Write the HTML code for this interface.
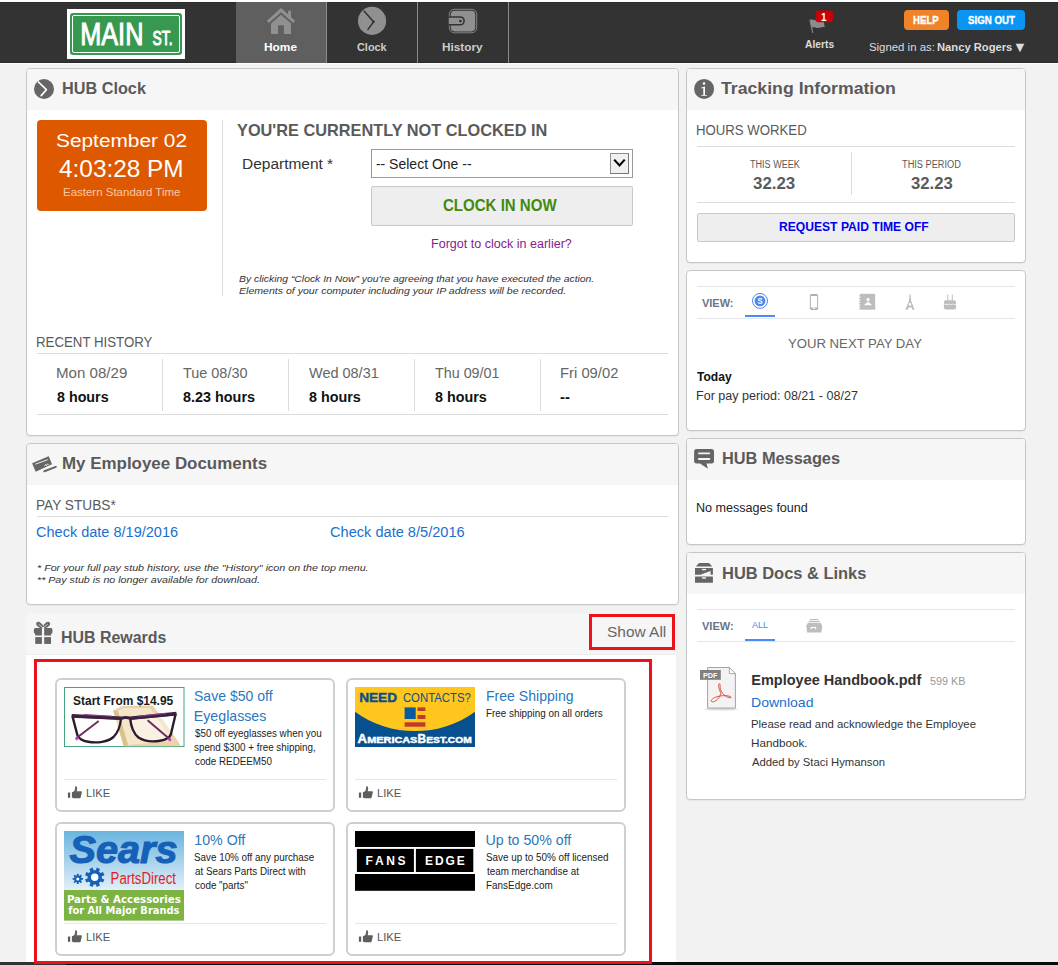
<!DOCTYPE html>
<html lang="en">
<head>
<meta charset="utf-8">
<title>HUB Home</title>
<style>
*{box-sizing:border-box;margin:0;padding:0}
html,body{width:1058px;height:965px;overflow:hidden;background:#f2f2f2;font-family:"Liberation Sans","DejaVu Sans",sans-serif;color:#333}
body{position:relative}
.a{position:absolute}
.t{position:absolute;white-space:nowrap;line-height:1;transform-origin:0 0}
#topstrip{left:0;top:0;width:1058px;height:2px;background:#fff}
#hdr{left:0;top:2px;width:1058px;height:61px;background:#333;border-bottom:1px solid #2a2a2a;border-top:1px solid #2c2c2c}
#hdrline{left:0;top:63px;width:1058px;height:1px;background:#fcfcfc}
#botstrip{left:0;top:962px;width:1058px;height:3px;background:#0a0a12}
.tab{position:absolute;top:2px;height:61px;width:91px;border-right:1px solid #8c8c8c}
.panel{position:absolute;background:#fff;border:1px solid #c6c6c6;border-radius:4px;box-shadow:0 1px 1px rgba(0,0,0,.05)}
.ph{position:absolute;left:0;top:0;right:0;background:#f6f6f6;border-radius:3px 3px 0 0}
.hr{position:absolute;height:1px;background:#dcdcdc}
.vr{position:absolute;width:1px;background:#dcdcdc}
.btn{position:absolute;background:#eee;border:1px solid #c8c8c8;border-radius:2px}
.card{position:absolute;width:280px;height:134px;background:#fff;border:2px solid #cfcfcf;border-radius:6px}
.chr{position:absolute;height:1px;background:#e6e6e6}
svg{position:absolute;overflow:visible}
</style>
</head>
<body>

<div class="a" id="topstrip"></div>
<div class="a" id="hdr"></div>
<div class="a" id="hdrline"></div>

<!-- logo -->
<div class="a" style="left:67px;top:9px;width:118px;height:50px;background:#fff"></div>
<div class="a" style="left:70px;top:13px;width:112px;height:42px;background:#37994f;border-radius:3px"></div>
<div class="a" style="left:72px;top:15px;width:108px;height:38px;border:1px solid #fff;border-radius:2px"></div>

<!-- nav tabs -->
<div class="tab" style="left:236px;background:#5f5f5f"></div>
<div class="tab" style="left:327px"></div>
<div class="tab" style="left:418px"></div>

<!-- header buttons -->
<div class="a" style="left:904px;top:10px;width:45px;height:20px;background:#f08228;border-radius:4px"></div>
<div class="a" style="left:957px;top:10px;width:68px;height:20px;background:#0a95f5;border-radius:4px"></div>

<!-- LEFT PANEL 1: HUB Clock -->
<div class="panel" style="left:26px;top:68px;width:653px;height:368px"><div class="ph" style="height:41px"></div></div>
<div class="a" style="left:37px;top:120px;width:170px;height:91px;background:#de5800;border-radius:4px"></div>
<div class="vr" style="left:222px;top:120px;height:176px"></div>
<div class="a" style="left:371px;top:149px;width:262px;height:29px;background:#fff;border:1px solid #9a9a9a"></div>
<div class="a" style="left:610px;top:153px;width:19px;height:21px;background:#f0f0f0;border:1px solid #8e8e8e;border-right-color:#7a7a7a;border-bottom-color:#7a7a7a"></div>
<div class="btn" style="left:371px;top:186px;width:262px;height:40px"></div>
<div class="hr" style="left:37px;top:353px;width:631px"></div>
<div class="hr" style="left:37px;top:414px;width:631px"></div>
<div class="vr" style="left:162px;top:359px;height:52px"></div>
<div class="vr" style="left:288px;top:359px;height:52px"></div>
<div class="vr" style="left:414px;top:359px;height:52px"></div>
<div class="vr" style="left:540px;top:359px;height:52px"></div>

<!-- LEFT PANEL 2: My Employee Documents -->
<div class="panel" style="left:26px;top:443px;width:653px;height:162px"><div class="ph" style="height:41px"></div></div>
<div class="hr" style="left:37px;top:516px;width:631px"></div>

<!-- LEFT PANEL 3: HUB Rewards -->
<div class="a" style="left:26px;top:613px;width:650px;height:42px;background:#f6f6f6"></div>
<div class="a" style="left:26px;top:654px;width:650px;height:311px;background:#fff;border-top:1px solid #eee"></div>
<div class="a" id="botstrip"></div><div class="a" style="left:0;top:962px;width:66px;height:3px;background:#333"></div>
<div class="a" style="left:589px;top:614px;width:86px;height:36px;border:3px solid #ec111a"></div>
<div class="a" style="left:34px;top:659px;width:618px;height:305px;border:3px solid #ec111a"></div>
<div class="card" style="left:55px;top:678px"></div>
<div class="card" style="left:346px;top:678px"></div>
<div class="card" style="left:55px;top:822px"></div>
<div class="card" style="left:346px;top:822px"></div>
<div class="chr" style="left:64px;top:779px;width:262px"></div>
<div class="chr" style="left:355px;top:779px;width:262px"></div>
<div class="chr" style="left:64px;top:923px;width:262px"></div>
<div class="chr" style="left:355px;top:923px;width:262px"></div>

<!-- RIGHT PANEL 1: Tracking -->
<div class="panel" style="left:686px;top:68px;width:340px;height:195px"><div class="ph" style="height:41px"></div></div>
<div class="hr" style="left:697px;top:146px;width:318px"></div>
<div class="hr" style="left:697px;top:202px;width:318px"></div>
<div class="vr" style="left:851px;top:152px;height:43px"></div>
<div class="btn" style="left:697px;top:213px;width:318px;height:29px"></div>

<!-- RIGHT PANEL 2: view -->
<div class="panel" style="left:686px;top:270px;width:340px;height:161px"></div>
<div class="hr" style="left:697px;top:286px;width:318px;background:#e3e5eb"></div>
<div class="hr" style="left:697px;top:318px;width:318px;background:#e3e5eb"></div>
<div class="a" style="left:745px;top:315px;width:30px;height:2px;background:#4c8bf5"></div>

<!-- RIGHT PANEL 3: messages -->
<div class="panel" style="left:686px;top:438px;width:340px;height:107px"><div class="ph" style="height:41px"></div></div>

<!-- RIGHT PANEL 4: docs -->
<div class="panel" style="left:686px;top:552px;width:340px;height:248px"><div class="ph" style="height:41px"></div></div>
<div class="hr" style="left:697px;top:609px;width:318px;background:#e3e5eb"></div>
<div class="hr" style="left:697px;top:641px;width:318px;background:#e3e5eb"></div>
<div class="a" style="left:745px;top:639px;width:30px;height:2px;background:#4c8bf5"></div>


<svg width="1058" height="965" viewBox="0 0 1058 965" style="left:0;top:0" font-family="'Liberation Sans',sans-serif">
<!-- logo text -->
<g fill="#fff" font-weight="normal" stroke="#fff" stroke-width="1">
<text x="80.2" y="45" font-size="31" textLength="63.2" lengthAdjust="spacingAndGlyphs">MAIN</text>
<text x="152.6" y="45" font-size="19.5" textLength="20" lengthAdjust="spacingAndGlyphs">ST.</text>
</g>
<!-- home icon -->
<g fill="#909090">
<path d="M281 7.9L295.1 20.7L293.2 23L281 12.2L268.8 23L266.9 20.7Z"/>
<rect x="288.1" y="10.7" width="2.9" height="6.5"/>
<path d="M281 14.8L291 23.6V34H283.9V25.2H278.1V34H271V23.6Z"/>
</g>
<!-- clock icon -->
<circle cx="372.05" cy="20.9" r="14.1" fill="#909090"/>
<path d="M364.25 11.2L373.5 21.85L368 29.4" fill="none" stroke="#333" stroke-width="1.6" stroke-linecap="round" stroke-linejoin="round"/>
<circle cx="373.5" cy="21.85" r="1.3" fill="#333"/>
<!-- history (wallet) icon -->
<rect x="449.3" y="9.3" width="27.4" height="23.5" rx="5" fill="none" stroke="#909090" stroke-width="0.9"/>
<rect x="450.8" y="10.8" width="24.4" height="20.6" rx="3.8" fill="#909090"/>
<path d="M448.9 16.2H460.2A4.7 4.7 0 0 1 460.2 25.6H448.9Z" fill="#333"/>
<path d="M448.9 17.8H460.2A3.1 3.1 0 0 1 460.2 24H448.9Z" fill="#909090"/>
<circle cx="460.4" cy="21.1" r="1.4" fill="#333"/>
<!-- alerts flag -->
<path d="M809.9 19.6L812.7 32.8" stroke="#8c8c8c" stroke-width="1.1" fill="none"/>
<path d="M810.2 20C812.5 18.8 814.5 20.6 817 20.4C819.5 20.2 821.5 19.2 823.6 19.6L824.6 27.2C822 26.6 820 27.9 817.5 27.9C815.5 27.9 813.6 26.6 811.6 27.5Z" fill="#8c8c8c"/>
<rect x="815.5" y="10.6" width="17.5" height="11.6" rx="3" fill="#c8000a"/>
<!-- HUB Clock title icon -->
<circle cx="44" cy="89" r="10" fill="#666"/>
<path d="M38.4 82L46.4 89.7L41.2 95.6" fill="none" stroke="#fff" stroke-width="1.7" stroke-linecap="round" stroke-linejoin="round"/>
<!-- Documents (check) icon -->
<path d="M32.1 463.2L48.7 456.2L52 464.2L35.7 471.7Z" fill="#666"/>
<path d="M35.3 464.2L47.7 459.7" stroke="#fff" stroke-width="0.9" fill="none"/>
<path d="M44.6 466.2L45.6 464.4L46.6 465.6L47.6 463.8L48.6 464.8" stroke="#fff" stroke-width="0.8" fill="none"/>
<path d="M44.4 471.3L55.8 466.9" stroke="#666" stroke-width="2" stroke-linecap="round" fill="none"/>
<!-- gift icon -->
<g fill="#666">
<path d="M35.2 628H41.9V635.6H35.25V634A1.5 3 0 0 1 35.2 628Z"/>
<path d="M44.2 628H51V628A1.5 3 0 0 1 51 634V635.6H44.2Z"/>
<rect x="35.25" y="637.1" width="6.65" height="6.8"/>
<rect x="44.2" y="637.1" width="6.8" height="6.8"/>
<ellipse cx="39.6" cy="625" rx="3.9" ry="2.3" transform="rotate(40 39.6 625)"/>
<ellipse cx="46.7" cy="625" rx="3.9" ry="2.3" transform="rotate(-40 46.7 625)"/>
</g>
<path d="M38.6 624.2L43.1 628L47.7 624.2" stroke="#f6f6f6" stroke-width="0.7" fill="none"/>
<!-- info icon -->
<circle cx="704.1" cy="88.9" r="10" fill="#666"/>
<circle cx="704" cy="83.4" r="1.25" fill="#fff"/>
<path d="M701.3 87.6L705 86.6V95H706.9V95.8H701.3V95H703.3V87.9L701.3 88.4Z" fill="#fff"/>
<!-- messages icon -->
<path d="M696.6 448.9H711.5A2.5 2.5 0 0 1 714 451.4V461.1A2.5 2.5 0 0 1 711.5 463.6H706.5L707.9 468.8L700 463.6H696.6A2.5 2.5 0 0 1 694.1 461.1V451.4A2.5 2.5 0 0 1 696.6 448.9Z" fill="#666"/>
<rect x="698" y="452.6" width="12.2" height="1.7" rx="0.8" fill="#f6f6f6"/>
<rect x="698" y="458" width="12.2" height="2" rx="0.8" fill="#f6f6f6"/>
<!-- docs icon -->
<g fill="#666">
<path d="M699 562.9H709L712.3 566.6H695.9Z"/>
<path d="M695 568.1H712.9V574.7H710.6V571L700.4 574.7H695Z"/>
<rect x="695" y="576.4" width="17.9" height="6.4" rx="0.5"/>
</g>
<rect x="701.9" y="568.9" width="4.1" height="1.3" fill="#f6f6f6"/>
<rect x="701.9" y="577" width="4.1" height="1.9" fill="#ccc"/>
<!-- select arrow -->
<path d="M614.2 159.6L619.5 165.4L624.7 159.6" fill="none" stroke="#000" stroke-width="2.1" stroke-linejoin="miter"/>
<!-- view icons -->
<circle cx="760" cy="300.9" r="7.5" fill="none" stroke="#4d8af0" stroke-width="1"/>
<circle cx="760" cy="300.9" r="5.4" fill="#4d8af0"/>
<text x="757.5" y="304" font-size="8.5" font-weight="bold" fill="#fff" textLength="5" lengthAdjust="spacingAndGlyphs">S</text>
<rect x="810.4" y="294.5" width="7.2" height="15" rx="1" fill="#fff" stroke="#aaa" stroke-width="0.9"/>
<rect x="810.4" y="294.5" width="7.2" height="1.4" fill="#aaa"/>
<rect x="810.4" y="307.6" width="7.2" height="1.9" fill="#aaa"/>
<rect x="812.8" y="308" width="2.4" height="0.9" fill="#fff"/>
<g fill="#bdbdbd">
<rect x="860.2" y="293.8" width="15" height="15.9"/>
<rect x="859.1" y="295.2" width="1.5" height="1.2"/><rect x="859.1" y="297.8" width="1.5" height="1.2"/><rect x="859.1" y="300.4" width="1.5" height="1.2"/><rect x="859.1" y="303" width="1.5" height="1.2"/><rect x="859.1" y="305.6" width="1.5" height="1.2"/><rect x="859.1" y="308" width="1.5" height="1.2"/>
</g>
<circle cx="868.1" cy="299.6" r="1.6" fill="#fff"/>
<path d="M863.8 305.3L868 301.4L872.2 305.3Z" fill="#fff"/>
<g fill="#bdbdbd">
<path d="M909.7 294.3H910.5L911.2 301L914.6 309.7H912.6L911.6 307.4H908.6L907.6 309.7H905.3L909 301Z"/>
</g>
<path d="M909.2 303H911L911.4 305.6H908.8Z" fill="#fff"/>
<g fill="#bdbdbd">
<rect x="947.3" y="294.6" width="1" height="5.7"/><rect x="951.8" y="294.6" width="1" height="5.7"/>
<path d="M946 300.3H954A2 2 0 0 1 956 302.3V307.4A2 2 0 0 1 954 309.4H946A2 2 0 0 1 943.9 307.4V302.3A2 2 0 0 1 946 300.3Z"/>
</g>
<path d="M944 304.4C945.5 303.2 946.5 305.6 948 304.4C949.5 303.2 950.5 305.6 952 304.4C953.5 303.2 954.5 305.6 956 304.4" stroke="#fff" stroke-width="0.7" fill="none"/>
<!-- docs drawer small icon -->
<g fill="#bdbdbd">
<rect x="810" y="619" width="8.4" height="1"/>
<rect x="808.8" y="620.8" width="10.8" height="1.2"/>
<path d="M808 622.8H820.4L822.2 625.5L821.4 632.5H807.1L806.3 625.5Z"/>
</g>
<path d="M810.6 629.3V627H816.2V629.3H815V628H811.8V629.3Z" fill="#fff"/>
<!-- PDF icon -->
<ellipse cx="721" cy="709.3" rx="17" ry="1.3" fill="#ddd"/>
<path d="M707.6 667.5H729.3L735.4 673.6V708.1H707.6Z" fill="#f3f3f3" stroke="#999" stroke-width="0.9"/>
<path d="M729.3 667.5V673.6H735.4Z" fill="#fff" stroke="#999" stroke-width="0.8"/>
<rect x="700" y="670" width="20.8" height="9.8" fill="#808080"/>
<text x="702.9" y="677.8" font-size="7.2" font-weight="bold" fill="#fff" textLength="14.6" lengthAdjust="spacingAndGlyphs">PDF</text>
<g fill="none" stroke="#e0301e" stroke-width="0.8">
<path d="M719.5 683.5C717.5 684.5 719.5 690 721 694C718 700 714 703 711.5 701.5C710.5 700.5 712 698.5 716 697C720 695.5 727 695 730.5 696.5C732 697.3 731 698.2 729 697.7C725.5 696.8 722.5 694 721 691C719.8 688 720.5 684 719.5 683.5Z"/>
</g>
<!-- thumbs -->
<g fill="#5e5e5e" transform="translate(0 0)">
<rect x="67.9" y="792.5" width="2.3" height="5.3"/>
<path d="M71.9 792.2L74.2 791.2C75 789.5 75.2 787.5 75.4 785.9C76.8 786 77.5 787.6 77 789.4L76.7 791.3H81.2C82 791.3 82 792.2 81.7 793L80.6 797.4C80.4 798 80 798.3 79.3 798.3H73.5L71.9 797.6Z"/>
</g>
<g fill="#5e5e5e" transform="translate(291 0)">
<rect x="67.9" y="792.5" width="2.3" height="5.3"/>
<path d="M71.9 792.2L74.2 791.2C75 789.5 75.2 787.5 75.4 785.9C76.8 786 77.5 787.6 77 789.4L76.7 791.3H81.2C82 791.3 82 792.2 81.7 793L80.6 797.4C80.4 798 80 798.3 79.3 798.3H73.5L71.9 797.6Z"/>
</g>
<g fill="#5e5e5e" transform="translate(0 144)">
<rect x="67.9" y="792.5" width="2.3" height="5.3"/>
<path d="M71.9 792.2L74.2 791.2C75 789.5 75.2 787.5 75.4 785.9C76.8 786 77.5 787.6 77 789.4L76.7 791.3H81.2C82 791.3 82 792.2 81.7 793L80.6 797.4C80.4 798 80 798.3 79.3 798.3H73.5L71.9 797.6Z"/>
</g>
<g fill="#5e5e5e" transform="translate(291 144)">
<rect x="67.9" y="792.5" width="2.3" height="5.3"/>
<path d="M71.9 792.2L74.2 791.2C75 789.5 75.2 787.5 75.4 785.9C76.8 786 77.5 787.6 77 789.4L76.7 791.3H81.2C82 791.3 82 792.2 81.7 793L80.6 797.4C80.4 798 80 798.3 79.3 798.3H73.5L71.9 797.6Z"/>
</g>
<!-- CARD 1 image: glasses -->
<rect x="64.5" y="687.5" width="119.5" height="59" fill="#fdfdfb" stroke="#45a384" stroke-width="1"/>
<path d="M113.2 710.4L122 706L152.9 705.5L180 744.2L179.4 746.2H123.8Z" fill="#ead3a6"/>
<path d="M118 711L124 708L150 708L172 741L128 745Z" fill="#f4e6c8"/>
<path d="M123.8 746.2L113.2 710.4L118 711L128 745Z" fill="#dcc08a"/>
<text x="73.1" y="704.9" font-size="12.5" font-weight="bold" fill="#1a1a1a" textLength="100.1" lengthAdjust="spacingAndGlyphs">Start From $14.95</text>
<g fill="rgba(255,255,255,0.45)" stroke="#2e1a30" stroke-width="2.4" stroke-linejoin="round">
<path d="M72.5 716.4L121 718.5C120.5 725 117.5 733 113.5 737C108 742 97 743.3 88 741.8C82.5 740.8 79 738.6 77.5 735.5Z"/>
<path d="M130.2 718.5L175.6 714.2L170.8 734.5C169.5 738 166 739.8 160 740.8C152 742 143.5 741 138.5 737.5C133.5 733.5 130.8 725 130.2 718.5Z"/>
</g>
<path d="M76.2 738.2L98.7 721M170.1 739.5L147.6 720.3" stroke="#6b2d66" stroke-width="2" fill="none"/>
<path d="M71.8 713.9L121.5 716.6C124.5 715.8 127 715.8 130 716.6L176.4 711.8L176.2 715.6L130 720C127.5 718.8 124 718.8 121.5 720L72 717.8Z" fill="#3d1f3f"/>
<path d="M84 714.6L112 716.2M138 716.2L166 713.4" stroke="#8a3d86" stroke-width="1.1" fill="none"/>
<circle cx="76.8" cy="738.6" r="1.7" fill="#d63ad2"/>
<circle cx="169.8" cy="739.8" r="1.5" fill="#d63ad2"/>
<!-- CARD 2 image: AmericasBest -->
<rect x="355" y="687" width="120" height="60" fill="#07508f"/>
<path d="M355 687H475V711.7C440 737.5 390 737.5 355 711.7Z" fill="#ffc61e"/>
<text x="359.2" y="701.6" font-size="12.5" font-weight="bold" fill="#0b4f8a" stroke="#0b4f8a" stroke-width="0.4" textLength="37.8" lengthAdjust="spacingAndGlyphs">NEED</text>
<text x="402.9" y="701.6" font-size="12.5" fill="#0b4f8a" textLength="68" lengthAdjust="spacingAndGlyphs">CONTACTS?</text>
<rect x="404.6" y="707.4" width="11.1" height="11.6" fill="#0b5aa0"/>
<rect x="417.5" y="707.4" width="7.9" height="3.6" fill="#c0392b"/>
<rect x="417.5" y="715" width="7.9" height="4" fill="#c0392b"/>
<rect x="404.6" y="722.3" width="20.8" height="4.4" fill="#c0392b"/>
<g fill="#fff" font-weight="bold" stroke="#fff" stroke-width="0.45">
<text x="357.6" y="742.8" font-size="12" textLength="9.5" lengthAdjust="spacingAndGlyphs">A</text>
<text x="367.3" y="742.8" font-size="8.6" textLength="50" lengthAdjust="spacingAndGlyphs">MERICAS</text>
<text x="417.6" y="742.8" font-size="12" textLength="8.5" lengthAdjust="spacingAndGlyphs">B</text>
<text x="426.3" y="742.8" font-size="8.6" textLength="45.4" lengthAdjust="spacingAndGlyphs">EST.COM</text>
</g>
<!-- CARD 3 image: Sears -->
<defs><linearGradient id="sky" x1="0" y1="0" x2="0" y2="1"><stop offset="0" stop-color="#69b4df"/><stop offset="1" stop-color="#e4f0f8"/></linearGradient></defs>
<rect x="64" y="831" width="120" height="59.5" fill="url(#sky)"/>
<rect x="64" y="890" width="120" height="30.6" fill="#7cb342"/>
<text x="69.6" y="863" font-size="39" font-weight="bold" font-style="italic" fill="#1560b8" stroke="#1560b8" stroke-width="1.1" textLength="108" lengthAdjust="spacingAndGlyphs">Sears</text>
<path d="M81.5 878.0L83.0 878.0L83.0 879.8L81.5 879.8L81.0 880.9L82.1 881.9L80.8 883.2L79.8 882.1L78.7 882.6L78.7 884.1L76.9 884.1L76.9 882.6L75.8 882.1L74.8 883.2L73.5 881.9L74.6 880.9L74.1 879.8L72.6 879.8L72.6 878.0L74.1 878.0L74.6 876.9L73.5 875.9L74.8 874.6L75.8 875.7L76.9 875.2L76.9 873.7L78.7 873.7L78.7 875.2L79.8 875.7L80.8 874.6L82.1 875.9L81.0 876.9Z" fill="#1560b8"/>
<circle cx="77.8" cy="878.9" r="1.5" fill="#fff"/>
<path d="M101.8 878.4L104.4 879.4L103.0 882.6L100.5 881.6L99.0 883.1L100.0 885.6L96.8 887.0L95.8 884.4L93.6 884.4L92.6 887.0L89.4 885.6L90.4 883.1L88.9 881.6L86.4 882.6L85.0 879.4L87.6 878.4L87.6 876.2L85.0 875.2L86.4 872.0L88.9 873.0L90.4 871.5L89.4 869.0L92.6 867.6L93.6 870.2L95.8 870.2L96.8 867.6L100.0 869.0L99.0 871.5L100.5 873.0L103.0 872.0L104.4 875.2L101.8 876.2Z" fill="#1560b8"/>
<circle cx="94.7" cy="877.3" r="3.7" fill="#fff"/>
<text x="110.6" y="883.5" font-size="16" fill="#e31b23" textLength="65.4" lengthAdjust="spacingAndGlyphs">PartsDirect</text>
<g fill="#fff" font-weight="bold" font-size="10.5" font-family="'DejaVu Sans','Liberation Sans',sans-serif">
<text x="66.9" y="902.5" textLength="114" lengthAdjust="spacingAndGlyphs">Parts &amp; Accessories</text>
<text x="68.2" y="914.4" textLength="111.2" lengthAdjust="spacingAndGlyphs">for All Major Brands</text>
</g>
<!-- CARD 4 image: FansEdge -->
<rect x="355" y="831" width="120" height="60" fill="#fff"/>
<rect x="355" y="831" width="120" height="16" fill="#000"/>
<rect x="356.9" y="848.9" width="57" height="23.1" fill="#000"/>
<rect x="415.9" y="848.9" width="57.4" height="23.1" fill="#000"/>
<rect x="355" y="874" width="120" height="16.8" fill="#000"/>
<g fill="#fff" font-weight="bold" font-size="12">
<text x="365.6" y="864.6" textLength="39.9" lengthAdjust="spacing">FANS</text>
<text x="425" y="864.6" textLength="39.7" lengthAdjust="spacing">EDGE</text>
</g>
</svg>
<span class="t" style="left:263.7px;top:41.0px;font-size:11.6px;color:#fff;font-weight:bold;transform:scaleX(1.026)">Home</span>
<span class="t" style="left:356.8px;top:41.0px;font-size:11.6px;color:#ccc;font-weight:bold;transform:scaleX(0.939)">Clock</span>
<span class="t" style="left:441.6px;top:41.0px;font-size:11.6px;color:#ccc;font-weight:bold;transform:scaleX(1.018)">History</span>
<span class="t" style="left:805.2px;top:39.0px;font-size:10.6px;color:#ddd;font-weight:bold;transform:scaleX(0.970)">Alerts</span>
<span class="t" style="left:821.0px;top:13.0px;font-size:10px;color:#fff;font-weight:bold">1</span>
<span class="t" style="left:913.0px;top:15.0px;font-size:10.5px;color:#fff;font-weight:bold;transform:scaleX(0.919);-webkit-text-stroke:0.35px #fff">HELP</span>
<span class="t" style="left:967.9px;top:15.0px;font-size:10.5px;color:#fff;font-weight:bold;transform:scaleX(0.924);-webkit-text-stroke:0.35px #fff">SIGN OUT</span>
<span class="t" style="left:868.9px;top:41.0px;font-size:11.7px;color:#ddd;transform:scaleX(0.974)">Signed in as:</span>
<span class="t" style="left:936.6px;top:41.0px;font-size:11.7px;color:#ddd;font-weight:bold;transform:scaleX(0.958)">Nancy Rogers</span>
<span class="t" style="left:1012.8px;top:40.0px;font-size:14.5px;color:#ddd">▼</span>
<span class="t" style="left:61.9px;top:81.0px;font-size:16px;color:#5a5a5a;font-weight:bold;transform:scaleX(1.015)">HUB Clock</span>
<span class="t" style="left:61.8px;top:456.0px;font-size:16px;color:#5a5a5a;font-weight:bold;transform:scaleX(1.058)">My Employee Documents</span>
<span class="t" style="left:60.7px;top:630.0px;font-size:16px;color:#5a5a5a;font-weight:bold;transform:scaleX(0.995)">HUB Rewards</span>
<span class="t" style="left:721.4px;top:81.0px;font-size:16px;color:#5a5a5a;font-weight:bold;transform:scaleX(1.105)">Tracking Information</span>
<span class="t" style="left:721.9px;top:451.0px;font-size:16px;color:#5a5a5a;font-weight:bold;transform:scaleX(1.021)">HUB Messages</span>
<span class="t" style="left:721.9px;top:566.0px;font-size:16px;color:#5a5a5a;font-weight:bold;transform:scaleX(1.028)">HUB Docs &amp; Links</span>
<span class="t" style="left:55.5px;top:132.0px;font-size:18.7px;color:#fff;transform:scaleX(1.116)">September 02</span>
<span class="t" style="left:59.1px;top:158.0px;font-size:23.5px;color:#fff;transform:scaleX(1.037)">4:03:28 PM</span>
<span class="t" style="left:62.6px;top:187.0px;font-size:11px;color:#f6caa6;transform:scaleX(1.044)">Eastern Standard Time</span>
<span class="t" style="left:236.9px;top:123.0px;font-size:15.7px;color:#5a5a5a;font-weight:bold;transform:scaleX(1.040)">YOU'RE CURRENTLY NOT CLOCKED IN</span>
<span class="t" style="left:242.2px;top:157.0px;font-size:14px;color:#333;transform:scaleX(1.105)">Department *</span>
<span class="t" style="left:375.9px;top:157.0px;font-size:14px;color:#222">-- Select One --</span>
<span class="t" style="left:442.9px;top:198.0px;font-size:16px;color:#418a0e;font-weight:bold;transform:scaleX(0.940)">CLOCK IN NOW</span>
<span class="t" style="left:431.0px;top:238.0px;font-size:12.3px;color:#8a1a8a;transform:scaleX(1.020)">Forgot to clock in earlier?</span>
<span class="t" style="left:238.5px;top:275.0px;font-size:9.3px;color:#333;font-style:italic;transform:scaleX(1.116)">By clicking “Clock In Now” you’re agreeing that you have executed the action.</span>
<span class="t" style="left:238.5px;top:287.0px;font-size:9.3px;color:#333;font-style:italic;transform:scaleX(1.136)">Elements of your computer including your IP address will be recorded.</span>
<span class="t" style="left:36.4px;top:336.0px;font-size:13.9px;color:#5a5a5a;transform:scaleX(0.955)">RECENT HISTORY</span>
<span class="t" style="left:55.8px;top:367.0px;font-size:13.9px;color:#666;transform:scaleX(1.086)">Mon 08/29</span>
<span class="t" style="left:182.7px;top:367.0px;font-size:13.9px;color:#666;transform:scaleX(1.039)">Tue 08/30</span>
<span class="t" style="left:308.5px;top:367.0px;font-size:13.9px;color:#666;transform:scaleX(1.042)">Wed 08/31</span>
<span class="t" style="left:434.6px;top:367.0px;font-size:13.9px;color:#666;transform:scaleX(1.031)">Thu 09/01</span>
<span class="t" style="left:559.6px;top:367.0px;font-size:13.9px;color:#666;transform:scaleX(1.066)">Fri 09/02</span>
<span class="t" style="left:56.9px;top:391.0px;font-size:13.9px;color:#111;font-weight:bold;transform:scaleX(1.028)">8 hours</span>
<span class="t" style="left:182.7px;top:391.0px;font-size:13.9px;color:#111;font-weight:bold;transform:scaleX(1.036)">8.23 hours</span>
<span class="t" style="left:308.5px;top:391.0px;font-size:13.9px;color:#111;font-weight:bold;transform:scaleX(1.032)">8 hours</span>
<span class="t" style="left:434.6px;top:391.0px;font-size:13.9px;color:#111;font-weight:bold;transform:scaleX(1.032)">8 hours</span>
<span class="t" style="left:559.6px;top:391.0px;font-size:13.9px;color:#111;font-weight:bold;transform:scaleX(1.075)">--</span>
<span class="t" style="left:36.3px;top:499.0px;font-size:13.9px;color:#5a5a5a;transform:scaleX(0.984)">PAY STUBS*</span>
<span class="t" style="left:36.0px;top:525.0px;font-size:14px;color:#1a6fd0;transform:scaleX(1.037)">Check date 8/19/2016</span>
<span class="t" style="left:329.7px;top:525.0px;font-size:14px;color:#1a6fd0;transform:scaleX(1.042)">Check date 8/5/2016</span>
<span class="t" style="left:36.7px;top:564.0px;font-size:9.3px;color:#333;font-style:italic;transform:scaleX(1.151)">* For your full pay stub history, use the "History" icon on the top menu.</span>
<span class="t" style="left:36.8px;top:576.0px;font-size:9.3px;color:#333;font-style:italic;transform:scaleX(1.147)">** Pay stub is no longer available for download.</span>
<span class="t" style="left:606.7px;top:625.0px;font-size:14.3px;color:#666;transform:scaleX(1.081)">Show All</span>
<span class="t" style="left:193.8px;top:689.0px;font-size:14.2px;color:#2a78bd;transform:scaleX(0.990)">Save $50 off</span>
<span class="t" style="left:193.8px;top:709.0px;font-size:14.2px;color:#2a78bd">Eyeglasses</span>
<span class="t" style="left:194.8px;top:729.0px;font-size:10px;color:#222;transform:scaleX(0.984)">$50 off eyeglasses when you</span>
<span class="t" style="left:193.8px;top:743.0px;font-size:10px;color:#222;transform:scaleX(0.984)">spend $300 + free shipping,</span>
<span class="t" style="left:194.8px;top:757.0px;font-size:10px;color:#222;transform:scaleX(0.981)">code REDEEM50</span>
<span class="t" style="left:485.6px;top:689.0px;font-size:14.2px;color:#2a78bd;transform:scaleX(0.991)">Free Shipping</span>
<span class="t" style="left:485.6px;top:709.0px;font-size:10px;color:#222;transform:scaleX(0.985)">Free shipping on all orders</span>
<span class="t" style="left:194.3px;top:833.0px;font-size:14.2px;color:#2a78bd">10% Off</span>
<span class="t" style="left:193.8px;top:853.0px;font-size:10px;color:#222;transform:scaleX(0.984)">Save 10% off any purchase</span>
<span class="t" style="left:194.8px;top:867.0px;font-size:10px;color:#222;transform:scaleX(0.982)">at Sears Parts Direct with</span>
<span class="t" style="left:194.8px;top:881.0px;font-size:10px;color:#222;transform:scaleX(0.985)">code "parts"</span>
<span class="t" style="left:485.6px;top:833.0px;font-size:14.2px;color:#2a78bd">Up to 50% off</span>
<span class="t" style="left:485.6px;top:853.0px;font-size:10px;color:#222;transform:scaleX(0.989)">Save up to 50% off licensed</span>
<span class="t" style="left:486.6px;top:867.0px;font-size:10px;color:#222;transform:scaleX(0.984)">team merchandise at</span>
<span class="t" style="left:485.6px;top:881.0px;font-size:10px;color:#222;transform:scaleX(0.992)">FansEdge.com</span>
<span class="t" style="left:86.0px;top:788.0px;font-size:11.2px;color:#555;transform:scaleX(1.004)">LIKE</span>
<span class="t" style="left:377.0px;top:788.0px;font-size:11.2px;color:#555;transform:scaleX(1.004)">LIKE</span>
<span class="t" style="left:86.0px;top:932.0px;font-size:11.2px;color:#555;transform:scaleX(1.004)">LIKE</span>
<span class="t" style="left:377.0px;top:932.0px;font-size:11.2px;color:#555;transform:scaleX(1.004)">LIKE</span>
<span class="t" style="left:696.2px;top:124.0px;font-size:13.9px;color:#5a5a5a;transform:scaleX(0.950)">HOURS WORKED</span>
<span class="t" style="left:749.8px;top:160.0px;font-size:10px;color:#5a5a5a;transform:scaleX(0.907)">THIS WEEK</span>
<span class="t" style="left:902.4px;top:160.0px;font-size:10px;color:#5a5a5a;transform:scaleX(0.922)">THIS PERIOD</span>
<span class="t" style="left:753.3px;top:175.0px;font-size:16.5px;color:#5a5a5a;font-weight:bold;transform:scaleX(1.022)">32.23</span>
<span class="t" style="left:910.6px;top:175.0px;font-size:16.5px;color:#5a5a5a;font-weight:bold;transform:scaleX(1.012)">32.23</span>
<span class="t" style="left:778.8px;top:221.0px;font-size:12.4px;color:#0000ee;font-weight:bold;transform:scaleX(0.977)">REQUEST PAID TIME OFF</span>
<span class="t" style="left:701.5px;top:298.0px;font-size:10.5px;color:#6b7385;font-weight:bold;transform:scaleX(1.045)">VIEW:</span>
<span class="t" style="left:788.4px;top:338.0px;font-size:12.8px;color:#666;transform:scaleX(1.027)">YOUR NEXT PAY DAY</span>
<span class="t" style="left:697.3px;top:371.0px;font-size:12px;color:#111;font-weight:bold;transform:scaleX(1.006)">Today</span>
<span class="t" style="left:696.3px;top:390.0px;font-size:12px;color:#333;transform:scaleX(1.046)">For pay period: 08/21 - 08/27</span>
<span class="t" style="left:696.3px;top:502.0px;font-size:12px;color:#222;transform:scaleX(1.048)">No messages found</span>
<span class="t" style="left:701.6px;top:621.0px;font-size:10.5px;color:#6b7385;font-weight:bold;transform:scaleX(1.052)">VIEW:</span>
<span class="t" style="left:752.1px;top:620.0px;font-size:9.8px;color:#4d8af0;transform:scaleX(0.918)">ALL</span>
<span class="t" style="left:751.3px;top:673.0px;font-size:14.5px;color:#333;font-weight:bold">Employee Handbook.pdf</span>
<span class="t" style="left:930.0px;top:676.0px;font-size:10.5px;color:#999;transform:scaleX(1.030)">599 KB</span>
<span class="t" style="left:751.3px;top:696.0px;font-size:13.5px;color:#1a6fd0;transform:scaleX(1.040)">Download</span>
<span class="t" style="left:751.3px;top:719.0px;font-size:11.2px;color:#333;transform:scaleX(1.016)">Please read and acknowledge the Employee</span>
<span class="t" style="left:751.3px;top:738.0px;font-size:11.2px;color:#333;transform:scaleX(1.046)">Handbook.</span>
<span class="t" style="left:752.3px;top:757.0px;font-size:11.2px;color:#333;transform:scaleX(1.009)">Added by Staci Hymanson</span>
</body>
</html>
